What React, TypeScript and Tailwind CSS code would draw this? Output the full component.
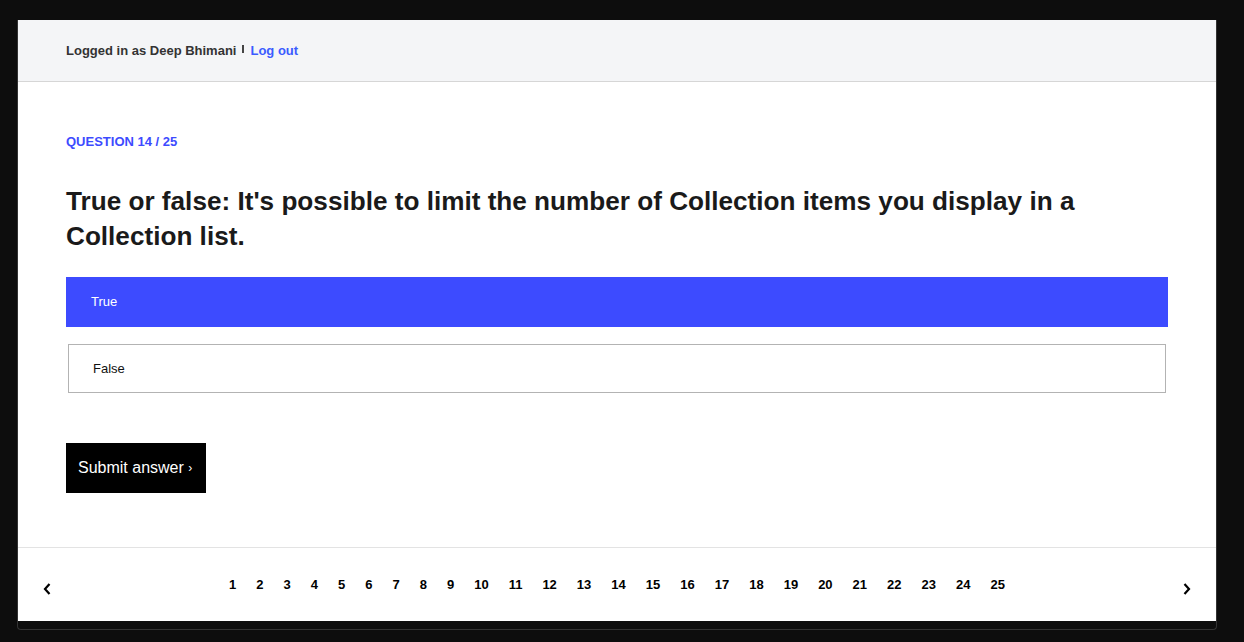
import React from "react";

const pages = Array.from({ length: 25 }, (_, i) => i + 1);

export default function App() {
  return (
    <div className="min-h-[642px] bg-[#0d0d0d] pt-[20px] pl-[17px] font-['Liberation_Sans',Arial,sans-serif]">
      <div className="w-[1200px] h-[610px] border-x border-b border-[#333] rounded-b-[4px]">
        <div className="bg-white h-[601px] flex flex-col">
          {/* header */}
          <div className="h-[62px] shrink-0 bg-[#f4f5f7] border-b border-[#d6d6d6] flex items-center pl-[48px] text-[13px] font-bold">
            <span className="text-[#333]">Logged in as Deep Bhimani</span>
            <span className="mx-[6px] w-[2px] h-[8px] bg-[#444] -translate-y-[2px]" />
            <a href="#" className="text-[#3b5bff]">Log out</a>
          </div>

          {/* question */}
          <div className="flex-1 px-[48px] pt-[52px]">
            <div className="text-[13px] leading-[15px] font-bold text-[#3d4bff]">QUESTION 14 / 25</div>
            <h1 className="mt-[35px] text-[26.15px] leading-[35px] font-bold text-[#1a1a1a]">
              True or false: It's possible to limit the number of Collection items you display in a Collection list.
            </h1>
            <div className="mt-[23px] flex flex-col gap-[17px]">
              <div className="h-[50px] bg-[#3d4bff] flex items-center pl-[25px] text-[13px] text-white">True</div>
              <div className="mx-[2px] h-[49px] border border-[#b3b3b3] flex items-center pl-[24px] text-[13px] text-[#111]">False</div>
            </div>
            <button className="mt-[50px] w-[140px] h-[50px] bg-black text-white text-[16px] text-left pl-[12px]">
              Submit answer <span className="text-[12px] relative -top-[1px]">›</span>
            </button>
          </div>

          {/* pagination */}
          <div className="h-[74px] shrink-0 border-t border-[#e3e3e3] flex items-center justify-between px-[25px]">
            <svg width="8" height="12" viewBox="0 0 8 12" className="mt-[8px]">
              <polyline points="6.5,1 2,6 6.5,11" fill="none" stroke="#000" strokeWidth="2.2" />
            </svg>
            <div className="flex items-center text-[13px] font-bold text-black">
              {pages.map((p) => (
                <span key={p} className="px-[10px]">{p}</span>
              ))}
            </div>
            <svg width="8" height="12" viewBox="0 0 8 12" className="mt-[8px]">
              <polyline points="1.5,1 6,6 1.5,11" fill="none" stroke="#000" strokeWidth="2.2" />
            </svg>
          </div>
        </div>
      </div>
    </div>
  );
}
